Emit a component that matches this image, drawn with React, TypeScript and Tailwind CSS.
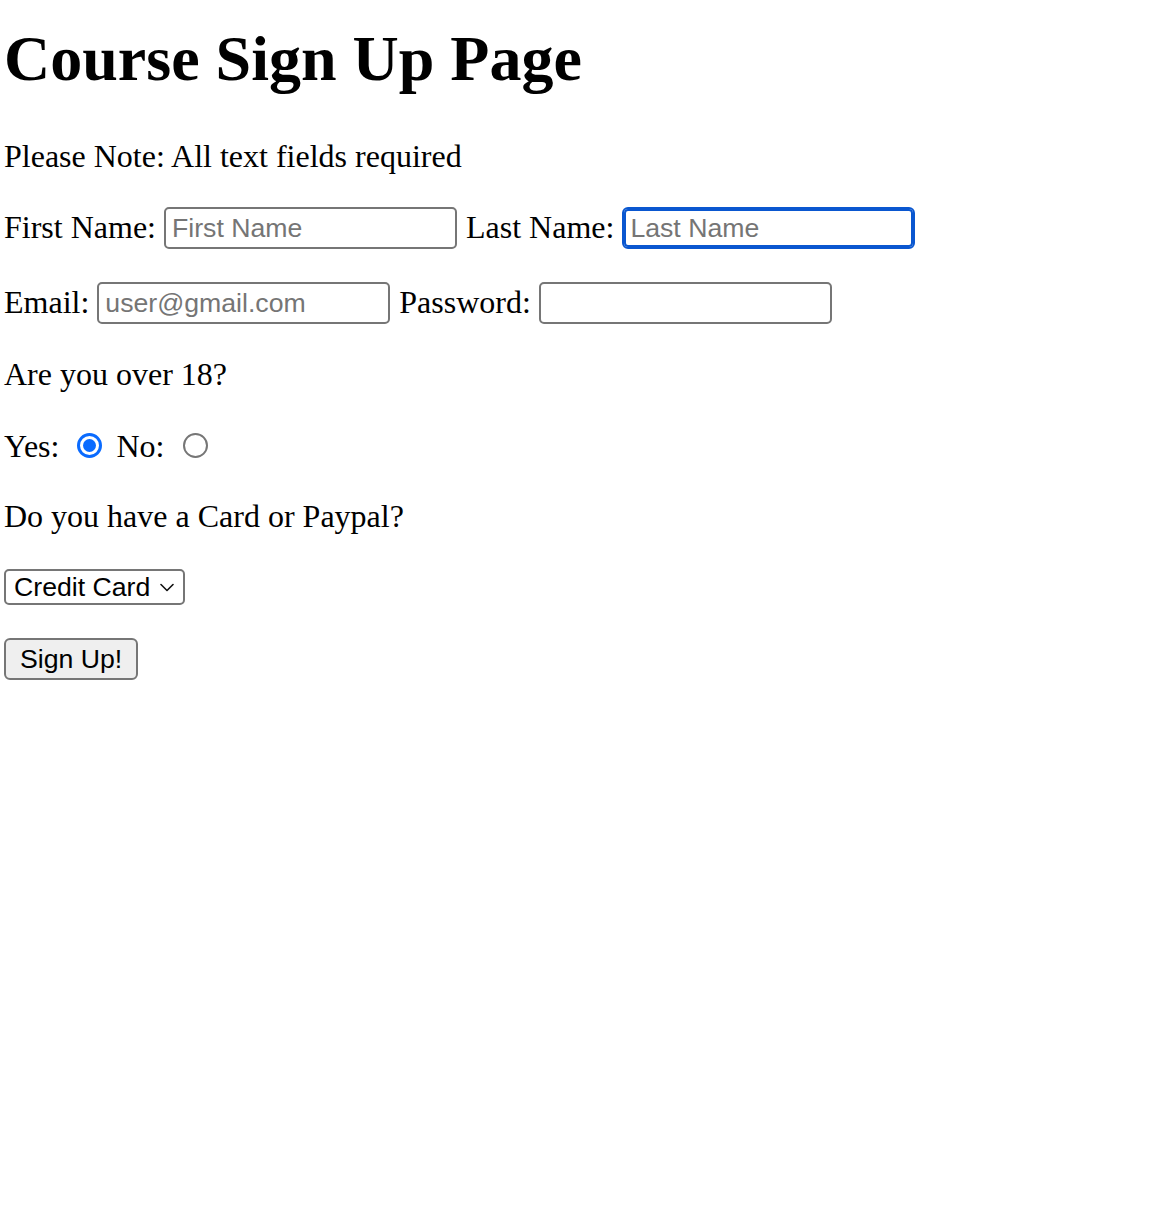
import React from "react";

const serif = "font-['Liberation_Serif','Times_New_Roman',Times,serif]";
const sans = "font-['Liberation_Sans',Arial,Helvetica,sans-serif]";

function TextInput({
  placeholder,
  type = "text",
  focused = false,
}: {
  placeholder?: string;
  type?: string;
  focused?: boolean;
}) {
  return (
    <input
      type={type}
      placeholder={placeholder}
      className={
        focused
          ? "h-[42px] w-[293px] shrink-0 rounded-[6px] border-2 border-[#0a57d0] bg-white px-[6px] font-['Liberation_Sans',Arial,Helvetica,sans-serif] text-[26.67px] text-black shadow-[inset_0_0_0_2px_#0a57d0] outline-none placeholder:text-[#757575]"
          : "h-[42px] w-[293px] shrink-0 rounded-[5px] border-2 border-[#767676] bg-white px-[6px] font-['Liberation_Sans',Arial,Helvetica,sans-serif] text-[26.67px] text-black outline-none placeholder:text-[#757575]"
      }
    />
  );
}

export default function App() {
  return (
    <div className={`min-h-screen bg-white pl-[4px] text-black ${serif}`}>
      <h1 className="mt-[23px] h-[71px] text-[64px] font-bold leading-[71px]">
        Course Sign Up Page
      </h1>

      <p className="mt-[44px] h-[36px] text-[32px] leading-[36px]">
        Please Note: All text fields required
      </p>

      <div className="mt-[33px] flex h-[42px] items-start gap-[8px] text-[32px]">
        <span className="mt-[2px] leading-[36px]">First Name:</span>
        <TextInput placeholder="First Name" />
        <span className="ml-[1px] mt-[2px] leading-[36px]">Last Name:</span>
        <TextInput placeholder="Last Name" focused />
      </div>

      <div className="mt-[33px] flex h-[42px] items-start gap-[8px] text-[32px]">
        <span className="mt-[2px] leading-[36px]">Email:</span>
        <TextInput placeholder="user@gmail.com" type="email" />
        <span className="ml-[1px] mt-[2px] leading-[36px]">Password:</span>
        <TextInput type="password" />
      </div>

      <p className="mt-[32px] h-[36px] text-[32px] leading-[36px]">
        Are you over 18?
      </p>

      <div className="mt-[32px] flex h-[40px] items-start text-[32px]">
        <span className="mt-[4px] leading-[36px]">Yes:</span>
        <span className="ml-[18px] mt-[9px] flex h-[25px] w-[25px] items-center justify-center rounded-full border-[3px] border-[#0a6bff] bg-white">
          <span className="h-[13px] w-[13px] rounded-full bg-[#0a6bff]" />
        </span>
        <span className="ml-[14px] mt-[4px] leading-[36px]">No:</span>
        <span className="ml-[19px] mt-[9px] h-[25px] w-[25px] rounded-full border-2 border-[#767676] bg-white" />
      </div>

      <p className="mt-[34px] h-[36px] text-[32px] leading-[36px]">
        Do you have a Card or Paypal?
      </p>

      <div className="mt-[35px] flex">
        <div
          className={`flex h-[36px] items-center rounded-[5px] border-2 border-[#767676] bg-white pl-[8px] pr-[9px] text-[26.67px] text-black ${sans}`}
        >
          <span className="leading-[30px]">Credit Card</span>
          <svg
            className="ml-[10px]"
            width="14"
            height="9"
            viewBox="0 0 14 9"
            fill="none"
          >
            <path
              d="M1 1.5 L7 7.5 L13 1.5"
              stroke="#111"
              strokeWidth="1.6"
              strokeLinecap="round"
              strokeLinejoin="round"
            />
          </svg>
        </div>
      </div>

      <div className="mt-[33px] flex">
        <button
          type="button"
          className={`flex h-[42px] items-center justify-center rounded-[6px] border-2 border-[#767676] bg-[#efefef] px-[14px] text-[26.67px] text-black ${sans}`}
        >
          Sign Up!
        </button>
      </div>
    </div>
  );
}
